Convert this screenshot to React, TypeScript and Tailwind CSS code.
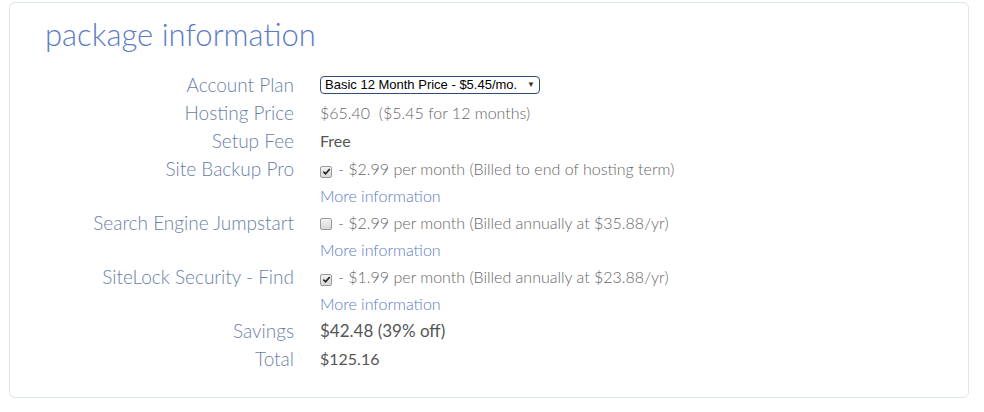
import React from 'react';

const rows = [
  { label: 'Site Backup Pro', checked: true, text: '- $2.99 per month (Billed to end of hosting term)' },
  { label: 'Search Engine Jumpstart', checked: false, text: '- $2.99 per month (Billed annually at $35.88/yr)' },
  { label: 'SiteLock Security - Find', checked: true, text: '- $1.99 per month (Billed annually at $23.88/yr)' },
];

function Box({ checked }: { checked: boolean }) {
  return (
    <span className="inline-flex w-[12px] h-[12px] mr-[6px] items-center justify-center rounded-[2px] border border-[#9a9a9a] bg-gradient-to-b from-[#f2f2f2] to-[#d8d8d8] align-[-1px]">
      {checked && (
        <svg viewBox="0 0 10 10" className="w-[9px] h-[9px]">
          <path d="M1.5 5.2 L4 7.6 L8.6 2.2" fill="none" stroke="#222" strokeWidth="1.8" />
        </svg>
      )}
    </span>
  );
}

function Label({ children }: { children: React.ReactNode }) {
  return (
    <div className="w-[310px] shrink-0 pr-[26px] text-right text-[19px] font-light leading-[28px] text-[#6a7fa6] whitespace-nowrap">
      {children}
    </div>
  );
}

export default function App() {
  return (
    <div className="w-[984px] h-[412px] bg-white font-['Lato',sans-serif] pt-[2px] pl-[9px]">
      <div className="w-[960px] h-[396px] rounded-[6px] border border-[#dde6ec]">
        <h2 className="pl-[35px] pt-[11px] text-[31px] font-light leading-[40px] text-[#5b7cc4]">
          package information
        </h2>

        <div className="mt-[17px] flex flex-col">
          <div className="flex">
            <Label>Account Plan</Label>
            <div className="flex items-center h-[28px]">
              <div className="flex items-center h-[18px] w-[220px] rounded-[4px] border border-[#2f4d7a] pl-[4px] pr-[4px] font-['Liberation_Sans',Arial,sans-serif] text-[13px] text-black">
                <span className="flex-1 whitespace-nowrap">Basic 12 Month Price - $5.45/mo.</span>
                <span className="text-[8px] text-[#333]">▼</span>
              </div>
            </div>
          </div>

          <div className="flex">
            <Label>Hosting Price</Label>
            <div className="text-[16px] font-light leading-[28px] text-[#666]">$65.40&nbsp; ($5.45 for 12 months)</div>
          </div>

          <div className="flex">
            <Label>Setup Fee</Label>
            <div className="text-[16px] leading-[28px] text-[#555]">Free</div>
          </div>

          {rows.map((r) => (
            <div key={r.label} className="flex">
              <Label>{r.label}</Label>
              <div className="flex flex-col">
                <div className="text-[16px] font-light leading-[28px] text-[#666] whitespace-nowrap">
                  <Box checked={r.checked} />
                  {r.text}
                </div>
                <a className="text-[16px] font-light leading-[26px] text-[#5b7cc4]">More information</a>
              </div>
            </div>
          ))}

          <div className="flex">
            <Label>Savings</Label>
            <div className="text-[17px] leading-[28px] text-[#555]">$42.48 (39% off)</div>
          </div>

          <div className="flex">
            <Label>Total</Label>
            <div className="text-[16px] leading-[28px] text-[#555]">$125.16</div>
          </div>
        </div>
      </div>
    </div>
  );
}
